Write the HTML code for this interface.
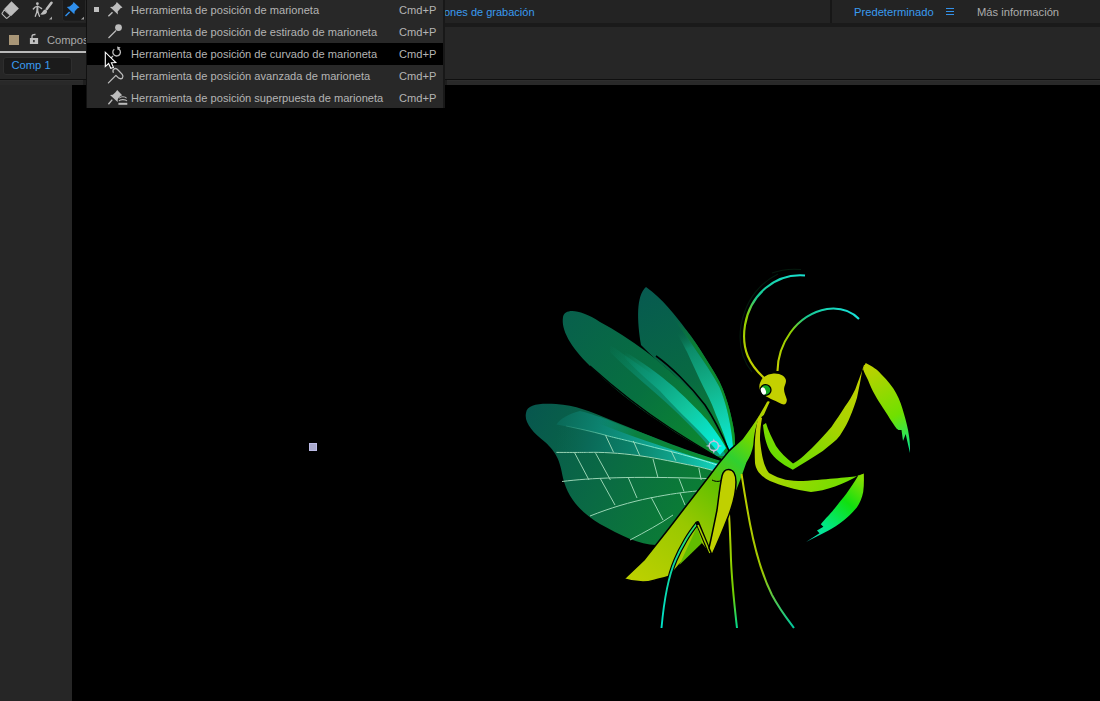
<!DOCTYPE html>
<html><head><meta charset="utf-8">
<style>
*{margin:0;padding:0;box-sizing:border-box}
html,body{width:1100px;height:701px;overflow:hidden;background:#232323;font-family:"Liberation Sans",sans-serif;position:relative}
.abs{position:absolute}
.t{position:absolute;white-space:nowrap;font-size:11.1px;line-height:13px}
</style></head><body>
<!-- toolbar -->
<div class="abs" style="left:0;top:0;width:1100px;height:23px;background:#232323"></div>
<div class="abs" style="left:0;top:23px;width:1100px;height:4px;background:#1a1a1a"></div>
<div class="abs" style="left:830px;top:0;width:2px;height:23px;background:#171717"></div>
<!-- panel header -->
<div class="abs" style="left:0;top:27px;width:1100px;height:52px;background:#262626"></div>
<div class="abs" style="left:0;top:79px;width:1100px;height:1px;background:#0f0f0f"></div>
<div class="abs" style="left:0;top:80px;width:1100px;height:5px;background:#292929;border-top:1px solid #2e2e2e"></div>
<div class="abs" style="left:83px;top:80px;width:3px;height:5px;background:#1e1e1e"></div>
<div class="abs" style="left:444px;top:80px;width:3px;height:5px;background:#1e1e1e"></div>
<div class="abs" style="left:0;top:85px;width:72px;height:616px;background:#262626"></div>
<div class="abs" style="left:72px;top:85px;width:1028px;height:616px;background:#000"></div>
<!--MANTIS--><svg class="abs" style="left:0;top:0" width="1100" height="701" viewBox="0 0 1100 701">
<defs>
<linearGradient id="gA" x1="646" y1="287" x2="733" y2="452" gradientUnits="userSpaceOnUse">
<stop offset="0" stop-color="#075a50"/><stop offset="0.55" stop-color="#086a42"/><stop offset="1" stop-color="#0c8a30"/></linearGradient>
<linearGradient id="gB" x1="565" y1="315" x2="725" y2="455" gradientUnits="userSpaceOnUse">
<stop offset="0" stop-color="#08604c"/><stop offset="0.5" stop-color="#077040"/><stop offset="1" stop-color="#0d8e2c"/></linearGradient>
<linearGradient id="gC" x1="526" y1="413" x2="700" y2="500" gradientUnits="userSpaceOnUse">
<stop offset="0" stop-color="#07574e"/><stop offset="0.5" stop-color="#0a6a44"/><stop offset="1" stop-color="#0b7e34"/></linearGradient>
<linearGradient id="gStripe" x1="0" y1="0" x2="1" y2="1" gradientUnits="objectBoundingBox">
<stop offset="0" stop-color="#0c9070"/><stop offset="0.6" stop-color="#12c8a0"/><stop offset="1" stop-color="#00f0d8"/></linearGradient>
<linearGradient id="gAbd" x1="630" y1="575" x2="765" y2="410" gradientUnits="userSpaceOnUse">
<stop offset="0" stop-color="#bcd000"/><stop offset="0.35" stop-color="#98c800"/><stop offset="0.58" stop-color="#64c000"/><stop offset="0.73" stop-color="#30d030"/><stop offset="0.85" stop-color="#70d800"/><stop offset="1" stop-color="#b8d000"/></linearGradient>
<linearGradient id="gAnt1" x1="805" y1="275" x2="762" y2="378" gradientUnits="userSpaceOnUse">
<stop offset="0" stop-color="#18e0d0"/><stop offset="0.35" stop-color="#18c890"/><stop offset="0.55" stop-color="#90d000"/><stop offset="1" stop-color="#c8d000"/></linearGradient>
<linearGradient id="gAnt2" x1="859" y1="319" x2="776" y2="372" gradientUnits="userSpaceOnUse">
<stop offset="0" stop-color="#18e0d8"/><stop offset="0.45" stop-color="#18c890"/><stop offset="0.65" stop-color="#90d000"/><stop offset="1" stop-color="#c8d000"/></linearGradient>
<linearGradient id="gLeg1" x1="866" y1="365" x2="910" y2="452" gradientUnits="userSpaceOnUse">
<stop offset="0" stop-color="#c0d000"/><stop offset="0.6" stop-color="#70e000"/><stop offset="1" stop-color="#00e890"/></linearGradient>
<linearGradient id="gLeg2" x1="862" y1="475" x2="806" y2="542" gradientUnits="userSpaceOnUse">
<stop offset="0" stop-color="#90e000"/><stop offset="0.35" stop-color="#10e010"/><stop offset="0.7" stop-color="#00e880"/><stop offset="1" stop-color="#10d8c8"/></linearGradient>
<linearGradient id="gFem" x1="792" y1="468" x2="864" y2="366" gradientUnits="userSpaceOnUse">
<stop offset="0" stop-color="#68dc00"/><stop offset="0.45" stop-color="#a4d400"/><stop offset="1" stop-color="#c8d000"/></linearGradient>
<linearGradient id="gLow" x1="760" y1="420" x2="862" y2="480" gradientUnits="userSpaceOnUse">
<stop offset="0" stop-color="#c0d000"/><stop offset="0.5" stop-color="#98d800"/><stop offset="1" stop-color="#68e000"/></linearGradient>
<linearGradient id="gHL1" x1="697" y1="523" x2="661" y2="628" gradientUnits="userSpaceOnUse">
<stop offset="0" stop-color="#30e060"/><stop offset="0.4" stop-color="#10d8a0"/><stop offset="1" stop-color="#00e0c8"/></linearGradient>
<linearGradient id="gHL2" x1="729" y1="514" x2="737" y2="628" gradientUnits="userSpaceOnUse">
<stop offset="0" stop-color="#c0d000"/><stop offset="0.7" stop-color="#70d000"/><stop offset="1" stop-color="#00d890"/></linearGradient>
<linearGradient id="gHL3" x1="742" y1="475" x2="794" y2="628" gradientUnits="userSpaceOnUse">
<stop offset="0" stop-color="#c0d000"/><stop offset="0.6" stop-color="#a0c800"/><stop offset="1" stop-color="#00c8a0"/></linearGradient>
<linearGradient id="gStripeA" x1="678" y1="332" x2="731" y2="450" gradientUnits="userSpaceOnUse">
<stop offset="0" stop-color="#0a6a48" stop-opacity="0"/><stop offset="0.15" stop-color="#0c8a68"/><stop offset="0.5" stop-color="#12b48c"/><stop offset="0.8" stop-color="#10d8b8"/><stop offset="1" stop-color="#00f0e0"/></linearGradient>
<linearGradient id="gStripeB" x1="625" y1="352" x2="724" y2="455" gradientUnits="userSpaceOnUse">
<stop offset="0" stop-color="#0c9070" stop-opacity="0"/><stop offset="0.25" stop-color="#0c9878"/><stop offset="0.6" stop-color="#12c8a0"/><stop offset="1" stop-color="#00f8e8"/></linearGradient>
<linearGradient id="gStripeC" x1="566" y1="415" x2="722" y2="462" gradientUnits="userSpaceOnUse">
<stop offset="0" stop-color="#0a7060"/><stop offset="0.5" stop-color="#10a890"/><stop offset="1" stop-color="#00e8d8"/></linearGradient>
<linearGradient id="gBandA" x1="676" y1="330" x2="729" y2="451" gradientUnits="userSpaceOnUse">
<stop offset="0" stop-color="#0a8a68" stop-opacity="0"/><stop offset="0.3" stop-color="#0a8a68"/><stop offset="1" stop-color="#0aa080"/></linearGradient>
<linearGradient id="gBandB" x1="610" y1="345" x2="726" y2="456" gradientUnits="userSpaceOnUse">
<stop offset="0" stop-color="#0a8a6a" stop-opacity="0"/><stop offset="0.3" stop-color="#0a8a6a" stop-opacity="0.85"/><stop offset="1" stop-color="#0aa080"/></linearGradient>
<linearGradient id="gTopC" x1="560" y1="415" x2="722" y2="465" gradientUnits="userSpaceOnUse">
<stop offset="0" stop-color="#0a6a58"/><stop offset="0.5" stop-color="#0f9c88"/><stop offset="1" stop-color="#10e0d0"/></linearGradient>
<linearGradient id="gMidC" x1="556" y1="438" x2="720" y2="470" gradientUnits="userSpaceOnUse">
<stop offset="0" stop-color="#0a6455" stop-opacity="0"/><stop offset="0.2" stop-color="#0a6a58"/><stop offset="0.45" stop-color="#0b8068"/><stop offset="0.75" stop-color="#10a890"/><stop offset="1" stop-color="#12d8c0"/></linearGradient>
<linearGradient id="gGrnC" x1="600" y1="420" x2="722" y2="463" gradientUnits="userSpaceOnUse">
<stop offset="0" stop-color="#0a7a45" stop-opacity="0"/><stop offset="0.3" stop-color="#0a8040"/><stop offset="1" stop-color="#0b9030"/></linearGradient>
<linearGradient id="gEdgeA" x1="672" y1="316" x2="734" y2="455" gradientUnits="userSpaceOnUse">
<stop offset="0" stop-color="#0a7040" stop-opacity="0"/><stop offset="0.25" stop-color="#0b8034"/><stop offset="1" stop-color="#10a028"/></linearGradient>
<linearGradient id="gVein1" x1="566" y1="426" x2="720" y2="466" gradientUnits="userSpaceOnUse">
<stop offset="0" stop-color="#60c8a8" stop-opacity="0.2"/><stop offset="0.3" stop-color="#80e0c0"/><stop offset="1" stop-color="#a0fff0"/></linearGradient>
</defs>

<!-- Wing A (back right) -->
<path d="M646,287 C662,298 676,316 686.3,330 C694,340 700,349 705.7,358.5 C711,367 715,373 719.4,381.4 C724,391 727,400 729.6,410 C732,420 735,432 735,442.7 C735,448 734.5,452 734,455 L727,451 C720,438 710,422 700,410 C698,405 696,401 694.2,398.5 C689,391 683,384 677.1,378 C671,372 666,368 660,363.1 C653,357 647,351 641,345 C637,320 636,296 646,287 Z" fill="url(#gA)"/>
<path d="M672,316 C678,322 682,326 686.3,330 C694,340 700,349 705.7,358.5 C711,367 715,373 719.4,381.4 C724,391 727,400 729.6,410 C732,420 735,432 735,442.7 C735,448 734.5,452 734,455 L733,447 C732.5,441 732,436 731,430 C730,423 728.5,416 727,410 C725,402 722.5,394 719.4,387 C713,375 705,363 697.7,352.8 C690,342 680,328 672,316 Z" fill="url(#gEdgeA)"/>
<path d="M676,332 C681,340 685,348 687.4,352.8 C693,365 698,376 703.4,387 C709,398 713,406 716,415 C720,424 722,430 724,435 C726,441 727.5,446 728.5,451 L733,447 C732.5,441 732,436 731,430 C730,423 728.5,416 727,410 C725,402 722.5,394 719.4,387 C713,375 705,363 697.7,352.8 C694,347 689,340 684,332 Z" fill="url(#gStripeA)"/>
<!-- Wing B -->
<path d="M563,317 C565,308 580,309 600,322 C630,338 660,360 690,390 C705,408 718,430 730,453 L724,461 C700,447 683,438 660,422 C630,402 610,385 590,366 C570,346 561,330 563,317 Z" fill="url(#gB)"/>
<path d="M610,345 C625,355 650,372 672,390 C690,405 705,422 718,440 C722,446 724,452 726,456 L716,456 C705,440 690,425 672,408 C655,392 630,372 610,352 Z" fill="url(#gBandB)"/>
<path d="M625,352 C640,360 660,375 674,387 C690,402 700,412 707,420 C716,432 722,440 726,448 L720,455 C712,444 702,434 691,423 C680,412 668,400 660,391 C648,380 638,372 625,358 Z" fill="url(#gStripeB)"/>
<path d="M656,356 C670,366 690,385 705,405 C715,420 723,437 730,453" stroke="#000" stroke-width="1.6" fill="none"/>
<path d="M590,366 C620,393 650,415 670,428 C690,441 705,450 724,461" stroke="#000" stroke-width="1.3" fill="none"/>
<!-- Wing C -->
<path d="M526,413 C527,404 540,403 556,404 C575,405 592,412 606,418 C625,426 645,434 671,444 C690,451 705,456 724,462 L656,545 C640,545 620,535 600,524 C580,512 568,498 563,478 C560,460 556,452 545,442 C532,432 524,422 526,413 Z" fill="url(#gC)"/>
<path d="M580,411 C592,414 600,417 606,419 C625,427 645,435 671,445 C690,452 705,457 724,462.5 L720,466 C705,461 690,456 654.6,447.5 C630,441 615,438 605.5,435.2 C590,431 570,427 556.4,424.5 C560,419 570,413 580,411 Z" fill="url(#gTopC)"/>
<path d="M556.4,424.5 C570,427 590,431 605.5,435.2 C615,438 630,441 654.6,447.5 C690,456 705,461 720,466 L718,472 C705,468 695,466 687.3,464.6 C670,461 650,457 638.2,455.6 C620,453 600,452 589,452.4 C575,452.5 565,452.5 556.4,452.4 C556,440 556,430 556.4,424.5 Z" fill="url(#gMidC)"/>
<path d="M600,417 C625,426 645,434 671,444.5 C690,451.5 705,456.5 724,462.3 L721,464.5 C700,459 680,452 660,445.5 C640,439 620,432 600,424 Z" fill="url(#gGrnC)"/>
<g stroke="#a8e0c0" stroke-width="1" fill="none" opacity="0.9">
<path d="M566,426 C580,429 590,431 605.5,435.2 C615,438 630,441 654.6,447.5 C690,456 705,461 720,466" stroke="url(#gVein1)"/>
<path d="M556.4,452.4 C575,452.5 589,452.4 589,452.4 C600,452 620,453 638.2,455.6 C650,457 670,461 687.3,464.6 C695,466 705,468 718,472"/>
<path d="M562,481.5 C590,478 630,476 707,478.5"/>
<path d="M590,516 C610,508 630,502 650,498 C670,494 685,492 697,491"/>
<path d="M630,540 C645,532 660,524 673,515"/>
<path d="M574.4,452.4 L589,480"/><path d="M595.6,453.2 L610.4,480"/>
<path d="M600,478 L615,505"/><path d="M628,477 L637,498"/>
<path d="M651,497 L663,520"/><path d="M653,459 L657.8,477"/>
<path d="M605.5,435.2 L613.6,452.4"/><path d="M633.3,441 L639.8,455.6"/>
<path d="M671,450.7 L675.8,460.6"/><path d="M679,478.5 L684,491.5"/><path d="M680,493 L685,505"/><path d="M698.8,468 L701.2,480"/>
</g>
<!-- Abdomen blade -->
<path d="M624,579 L644,560 C655,546 668,530 680,514 C690,501 700,488 708.6,477 C715,468 722,459 728.6,451.4 C733,447 738,443 742,439 C748,431 753,424 757.8,416.4 C761,411 764,406 766.4,401.4 C767.5,400 770,400.5 770.5,402 L768.5,406.4 L764.3,415.7 L759,420 C756,428 754.5,436 754,445 C753,452 750,458 747,463 L741,480 L711,556 L701,543 L679.3,564.8 L670,576 C665,578 662,578.6 659,579 C654,580 650,582 643,582 C635,582 630,581 624,579 Z" fill="url(#gAbd)" stroke="#000" stroke-width="1.5" stroke-linejoin="round"/>
<path d="M712,480 C716,482 720,482 724,479" stroke="#000" stroke-width="1" fill="none"/>
<!-- hind legs -->
<path d="M697,527 L702,543 L679.3,565 Z" fill="#62bc00"/>
<path d="M697.5,523 C692,530 688,536 685.7,540 C681,548 678,554 675.5,560 C669,575 664,600 661.5,628" stroke="#000" stroke-width="4.2" fill="none" stroke-linejoin="round"/>
<path d="M697.5,523 C692,530 688,536 685.7,540 C681,548 678,554 675.5,560 C669,575 664,600 661.5,628" stroke="url(#gHL1)" stroke-width="1.9" fill="none"/>
<path d="M697.5,523 L710.7,555" stroke="#000" stroke-width="4" stroke-linecap="round"/>
<path d="M698,525 L710,553" stroke="#a8d000" stroke-width="1.6"/>
<path d="M729,514 C730,530 730.5,545 731,560 C732,585 735,610 737,628" stroke="url(#gHL2)" stroke-width="2" fill="none"/>
<path d="M741.5,474 C744,490 747,508 750,524 C755,550 762,575 772,595 C780,610 788,620 794,628" stroke="url(#gHL3)" stroke-width="2" fill="none"/>
<!-- yellow leaf -->
<path d="M728.5,469.5 C733,469.5 736,474 736,482 C736,495 732,508 726,522 C721,535 716,546 712,555 L709,548 C712,535 715,520 717,510 C719,495 720,485 722,476 C723,472 725,469.5 728.5,469.5 Z" fill="#c0d000" stroke="#000" stroke-width="1.5"/>
<!-- neck -->
<!-- forelegs -->
<path d="M759,416 C756,425 754,440 755,463 C756,470 760,476 770,481 C780,485 795,490 811,492 C825,491 845,484 859,475 L864,474.5 L858,476 C850,477 830,479 803,481 C790,481 781,480 769,473 C764,466 762,458 760,440 C760,430 761,424 762,418 Z" fill="url(#gLow)"/>
<path d="M806,542 L819.5,533.2 L817,530.6 L823.4,526.8 L820.8,524.2 C826,518 830,514 832.4,511.3 C838,504 842,499 846.5,493.4 C851,487 855,481 858,476 L863.8,473.5 C864,480 864,486 863.2,492.1 C862,498 860,503 856.8,507.5 C852,513 848,517 843.9,520.3 C838,525 833,528 828.5,530.6 C820,535 812,539 806,542 Z" fill="url(#gLeg2)"/>
<path d="M763,425 C764,435 766,445 771,453 C778,462 786,466 792.8,469.7 C803,463 814,457 822.8,450.9 C830,445 836,441 840,435.5 C845,428 848,422 850.2,416.6 C853,410 855,404 857,397.8 C859,388 861,378 862.2,370.4 L866,364 L863.9,365.3 C861,374 858,382 855.3,389.2 C852,396 849,401 845,406.4 C841,413 836,420 831.4,426.9 C826,433 820,440 814.2,445.8 C807,453 800,460 793,463.5 C786,458 780,452 776,446 C772,438 768,430 766,423 Z" fill="url(#gFem)"/>
<path d="M865.7,363 C872,366 878,370 881,374 C888,381 893,387 896,393 C900,400 902,407 904,414 C906,421 908,428 909,436 C910,442 910,448 910,453 L907,440 L905.7,434 L903,441 L901.5,430 L898.5,430 L896.5,428.5 C894,425 892,422 890,419 C887,414 885,411 883,408 C880,403 877,399 875,395 C872,390 870,385 868,380 C866,376 864,372 863,369 Z" fill="url(#gLeg1)"/>
<!-- head -->
<path d="M762,378.8 C766,375 769,374 772.3,373.7 C776,373 780,374 782.5,375.4 C785,377 786,379 786,381 C786,384 784,386 784,389 C784,393 786,396 786.8,399.4 C787,402 786,404 784,404.5 C781,404 778,402 775.7,401 C773,400 771,399 768.8,397.7 C765,396 762,394 760.3,390.8 C759,388 759,385 760.3,382.3 Z" fill="#c4d000"/>
<circle cx="765.6" cy="390" r="5.4" fill="#14a820" stroke="#000" stroke-width="1.3"/>
<ellipse cx="763.4" cy="391" rx="2.4" ry="3.8" fill="#fff" transform="rotate(-20 763.4 391)"/>
<!-- antennae -->
<path d="M801,269.5 C790,268.5 780,270 772,273 M778,274 C760,283 746,300 741,325 C738,345 742,360 752,372" stroke="#0c3a20" stroke-width="1.1" fill="none" opacity="0.45"/>
<path d="M805,275.5 C775,273 750,295 745,325 C741,350 750,365 764,378" stroke="url(#gAnt1)" stroke-width="2.1" fill="none"/>
<path d="M777.5,371 C778,345 795,315 827,309 C842,307 852,312 859,319" stroke="url(#gAnt2)" stroke-width="2.1" fill="none"/>
<!-- pin icon -->
<g fill="#c4c0dc"><circle cx="713.8" cy="445.9" r="4.6" fill="none" stroke="#c4c0dc" stroke-width="1.5"/>
<path d="M712.6,441.6 L713.8,438.4 L715,441.6 Z M712.6,450.2 L713.8,453.8 L715,450.2 Z M709.5,444.7 L705.6,445.9 L709.5,447.1 Z M718.1,444.7 L722.2,445.9 L718.1,447.1 Z"/></g>
</svg>
<!--/MANTIS-->
<!-- comp area marker -->
<div class="abs" style="left:309px;top:443px;width:8px;height:8px;background:#a9a9cc;border:1px solid #bcbce6"></div>

<!--UI--><svg class="abs" style="left:0;top:0" width="1100" height="110" viewBox="0 0 1100 110">
<!-- eraser -->
<path d="M11.5,1.2 L18.9,8.5 L11.2,15.9 L4.1,9 Z" fill="#bcbcbc"/>
<path d="M4.3,9.8 L10.4,15.3 L7.2,18.2 C6.9,18.5 6.5,18.5 6.2,18.2 L2.2,14.2 C1.9,13.9 1.9,13.5 2.2,13.2 Z" fill="none" stroke="#bcbcbc" stroke-width="1.1" stroke-linejoin="round"/>
<!-- puppet figure -->
<circle cx="37.4" cy="3.7" r="1.4" fill="#bcbcbc"/>
<path d="M33.3,9 C34.5,7.2 36,6.4 37.6,6.4 C39,6.4 40.2,7.6 41.6,8.6" stroke="#bcbcbc" stroke-width="1.4" fill="none" stroke-linecap="round"/>
<path d="M37.5,6.5 L37.3,11.2" stroke="#bcbcbc" stroke-width="2" stroke-linecap="round"/>
<path d="M37.2,11 L35.3,16.3 M37.6,11 L38.8,14.5 L39.5,16.3" stroke="#bcbcbc" stroke-width="1.3" fill="none" stroke-linecap="round"/>
<!-- brush -->
<path d="M51.5,2.8 L46.8,9" stroke="#bcbcbc" stroke-width="2.6" stroke-linecap="round"/>
<path d="M45.8,9.6 C47.6,10.6 47.4,13 45.4,14 C43.8,14.8 42,14.9 40.2,14.6 C41.4,13.3 42.2,12 43.1,10.9 C43.9,10 44.9,9.4 45.8,9.6 Z" fill="#bcbcbc"/>
<path d="M49,19.6 L52,16.6 L52,19.6 Z" fill="#a8a8a8"/>
<!-- pin button -->
<rect x="62.5" y="-2" width="23" height="23.2" rx="2.5" fill="#1a1a1a" stroke="#2c2c2c" stroke-width="0.8"/>
<path d="M73.6,2 L79.5,7.5 L77.6,8.3 L74.8,11.3 L74.3,14.3 L66.8,7 L69.6,6.6 L72.6,3.9 Z" fill="#2f8fec"/>
<path d="M69.6,12 L65.5,16" stroke="#2f8fec" stroke-width="1.5"/>
<path d="M80.9,19.6 L84,16.8 L84,19.6 Z" fill="#a0a0a0"/>
<!-- lock -->
<rect x="29.9" y="38" width="8.2" height="6" fill="#c0c0c0"/>
<path d="M32,38 L32,36.5 C32,35 33,34.4 35.5,34.5" stroke="#c0c0c0" stroke-width="1.3" fill="none"/>
<path d="M33.9,40 L33.9,42.3" stroke="#262626" stroke-width="1.5"/>
<!-- hamburger -->
<path d="M946,8.5 L954,8.5 M946,11.5 L954,11.5 M946,14.5 L954,14.5" stroke="#3392ea" stroke-width="1.2"/>
</svg>
<!--/UI-->
<!-- top toolbar texts -->
<div class="t" style="left:444px;top:6px;color:#3a9bf0;font-size:11px">ones de grabación</div>
<div class="t" style="left:854px;top:6px;color:#3a9bf0;font-size:11.2px">Predeterminado</div>
<div class="t" style="left:977px;top:6px;color:#acacac;font-size:11.2px">Más información</div>

<!-- panel tab -->
<div class="abs" style="left:9px;top:35px;width:10px;height:10px;background:#a99677"></div>
<div class="t" style="left:47px;top:33.8px;color:#aaaaaa;font-size:11.2px">Compos</div>
<div class="abs" style="left:0;top:51px;width:86px;height:2px;background:#bababa"></div>
<div class="abs" style="left:3px;top:57px;width:69px;height:18px;background:#1b1b1b;border:1px solid #2e2e2e;border-radius:3px"></div>
<div class="t" style="left:11.5px;top:59px;color:#3a9bf0;font-size:11.2px">Comp 1</div>

<!-- menu -->
<div class="abs" style="left:86px;top:0;width:359px;height:108px;background:#282828;border-left:1px solid #111;border-right:2px solid #181818"></div>
<div class="abs" style="left:87px;top:43px;width:356px;height:22px;background:#000"></div>
<div class="abs" style="left:94px;top:7px;width:5px;height:5px;background:#c0c0c0"></div>
<div class="t" style="left:131px;top:4px;color:#b4b4b4">Herramienta de posición de marioneta</div>
<div class="t" style="left:131px;top:26px;color:#b4b4b4">Herramienta de posición de estirado de marioneta</div>
<div class="t" style="left:131px;top:48px;color:#b4b4b4">Herramienta de posición de curvado de marioneta</div>
<div class="t" style="left:131px;top:70px;color:#b4b4b4">Herramienta de posición avanzada de marioneta</div>
<div class="t" style="left:131px;top:92px;color:#b4b4b4">Herramienta de posición superpuesta de marioneta</div>
<div class="t" style="left:399px;top:4px;color:#b4b4b4">Cmd+P</div>
<div class="t" style="left:399px;top:26px;color:#b4b4b4">Cmd+P</div>
<div class="t" style="left:399px;top:48px;color:#b4b4b4">Cmd+P</div>
<div class="t" style="left:399px;top:70px;color:#b4b4b4">Cmd+P</div>
<div class="t" style="left:399px;top:92px;color:#b4b4b4">Cmd+P</div>

<!--MI--><svg class="abs" style="left:0;top:0" width="1100" height="110" viewBox="0 0 1100 110">
<!-- icon1 pin -->
<path d="M116.8,2 L122.5,7.6 L120.6,8.3 L117.7,11.4 L117.9,14.4 L110,7 L112.8,6.7 L115.8,4 Z" fill="#bcbcbc"/>
<path d="M112.5,12.2 L108.4,16.3" stroke="#bcbcbc" stroke-width="1.4"/>
<!-- icon2 stretch -->
<circle cx="118.5" cy="27.6" r="3.4" fill="#bcbcbc"/>
<path d="M116,30.5 L108.5,38" stroke="#bcbcbc" stroke-width="1.3"/>
<!-- icon3 curve -->
<path d="M114.3,49.2 A3.8,3.8 0 1 0 117.8,48.6" stroke="#bcbcbc" stroke-width="1.3" fill="none"/>
<path d="M117,46.5 L120.6,47.6 L117.8,50.3 Z" fill="#bcbcbc"/>
<path d="M113,56 L110.5,58.5" stroke="#bcbcbc" stroke-width="1.2"/>
<!-- icon4 advanced -->
<path d="M108.4,82.9 L115.9,75.4 L118.7,78.1 C119.7,79 121.6,79 122.4,78 C123.2,77 123,75.4 122.2,74.4 L117.8,69.8 C116.9,68.8 115.3,68.2 114.2,68.9 C113,69.6 112.8,71.2 113.2,72.4" stroke="#bcbcbc" stroke-width="1.3" fill="none" stroke-linecap="round" stroke-linejoin="round"/>
<!-- icon5 overlay -->
<path d="M117.2,90 L122.2,95.2 L120.3,96 L117.8,99.2 L117.6,102 L110,95.1 L112.8,94.8 L115.5,92.2 Z" fill="#bcbcbc"/>
<path d="M112.3,99.6 L108.4,104.3" stroke="#bcbcbc" stroke-width="1.4"/>
<path d="M118.2,98.4 C119,96 125.5,95.5 127.2,98.4 Z" fill="#262626"/>
<path d="M119.3,98.2 C120.3,96.3 125.3,96.3 126.6,98.2" stroke="#bcbcbc" stroke-width="1.1" fill="none"/>
<path d="M119,101 C120,99.2 125.6,99.2 127,101" stroke="#bcbcbc" stroke-width="1.1" fill="none"/>
<rect x="118.4" y="102.8" width="8.9" height="2" fill="#bcbcbc"/>
<!-- cursor -->
<path d="M105.3,52.2 L105.3,66.6 L108.6,63.5 L110.8,68.3 L113.4,67.4 L111.4,62.8 L115.8,62.6 Z" fill="#000" stroke="#fff" stroke-width="1.1" stroke-linejoin="miter"/>
</svg>
<!--/MI-->
</body></html>
